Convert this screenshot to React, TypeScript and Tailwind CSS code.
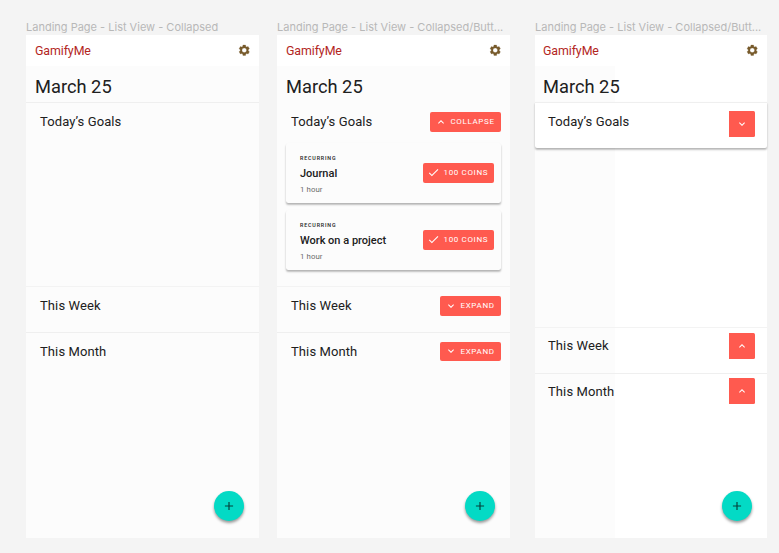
import type { ReactNode } from "react";
import { MdAdd, MdCheck, MdExpandLess, MdExpandMore } from "react-icons/md";

function GearIcon() {
  return (
    <svg viewBox="0 0 24 24" className="size-[12.5px]" fill="#775a2b" stroke="#775a2b" strokeWidth="0.5" fillRule="evenodd">
      <path d="M9.500 2h5l.5 2.800 1.700 1 2.700-1 2.500 4.300-2.200 1.800v2.200l2.200 1.800-2.500 4.300-2.700-1-1.700 1-.5 2.800h-5L9 19.200l-1.700-1-2.700 1-2.500-4.300 2.200-1.800v-2.200L2.100 9.100l2.500-4.300 2.700 1 1.700-1zM12 7.500a4.500 4.500 0 1 0 0 9 4.500 4.500 0 0 0 0-9z" />
    </svg>
  );
}

function Frame({ label, split, children }: { label: string; split?: boolean; children: ReactNode }) {
  return (
    <div className={split ? "w-[232px]" : "w-[233px]"}>
      <div className="h-[15px] whitespace-nowrap font-['Inter'] text-[11px] leading-[15px] text-[#b8b8b8]">{label}</div>
      <div
        className={`relative flex h-[503px] flex-col ${
          split ? "bg-[linear-gradient(90deg,#fcfcfc_80px,#ffffff_80px)]" : "bg-[#fcfcfc]"
        }`}
      >
        <header className={`flex h-[31px] items-center justify-between bg-white pr-[9px] ${split ? "pl-[8px]" : "pl-[9px]"}`}>
          <span className="pt-[1px] text-[12.4px] leading-[30px] tracking-[-0.1px] text-[#b3261e]">GamifyMe</span>
          <GearIcon />
        </header>
        <h1 className={`h-[36px] pt-[4px] text-[18.3px] leading-[34px] ${split ? "pl-[8px]" : "pl-[9px]"}`}>March 25</h1>
        {children}
        <button className="absolute bottom-[17px] right-[15px] flex size-[30px] items-center justify-center rounded-full bg-[#03dac5] shadow-[0_2px_3px_rgba(0,0,0,0.4)]">
          <MdAdd className="size-[14px] text-[#06403b]" />
        </button>
      </div>
    </div>
  );
}

function Section({
  title,
  className,
  titleClass = "pl-[14px] pt-[9px]",
  action,
  children,
}: {
  title: string;
  className: string;
  titleClass?: string;
  action?: ReactNode;
  children?: ReactNode;
}) {
  return (
    <section className={`border-t ${className}`}>
      <div className="flex items-start justify-between">
        <h2 className={`text-[13px] leading-[20px] tracking-[0.1px] ${titleClass}`}>{title}</h2>
        {action}
      </div>
      {children}
    </section>
  );
}

function Chevron({ up }: { up?: boolean }) {
  const Icon = up ? MdExpandLess : MdExpandMore;
  return <Icon className="size-[12px] shrink-0" />;
}

function ToggleButton({ open, className = "mt-[9px]" }: { open?: boolean; className?: string }) {
  return (
    <button
      className={`mr-[9px] flex h-[19.5px] items-center gap-[3.5px] whitespace-nowrap rounded-[2px] bg-[#ff5a4f] pl-[5px] text-[8px] leading-[19px] tracking-[0.65px] text-white ${
        open ? "w-[71px]" : "w-[61px]"
      } ${className}`}
    >
      <Chevron up={open} />
      {open ? "COLLAPSE" : "EXPAND"}
    </button>
  );
}

function SquareButton({ up, className }: { up?: boolean; className: string }) {
  return (
    <button className={`mr-[12px] flex size-[26px] items-center justify-center rounded-r-[1.5px] bg-[#ff5a4f] text-white ${className}`}>
      <Chevron up={up} />
    </button>
  );
}

function GoalCard({ title }: { title: string }) {
  return (
    <div className="flex h-[60px] items-start justify-between rounded-[2.5px] bg-[#fcfcfc] pl-[14px] pr-[7px] shadow-[0_2px_2px_rgba(0,0,0,0.22),0_1px_2px_rgba(0,0,0,0.1)]">
      <div className="pt-[11px]">
        <div className="text-[5.3px] font-medium leading-[9px] tracking-[0.85px]">RECURRING</div>
        <div className="mt-[2px] text-[11px] font-medium leading-[18px]">{title}</div>
        <div className="mt-[2px] text-[7.8px] leading-[10px] tracking-[0.1px] text-[#6c6c6c]">1 hour</div>
      </div>
      <button className="mt-[20px] flex h-[19.5px] w-[71px] items-center whitespace-nowrap rounded-[2px] bg-[#ff5a4f] pl-[4px] text-[8px] leading-[19px] tracking-[0.65px] text-white">
        <MdCheck className="mr-[3.5px] size-[13px] shrink-0" />
        100 COINS
      </button>
    </div>
  );
}

export default function App() {
  return (
    <main className="flex h-[553px] w-[779px] overflow-hidden bg-[#f4f4f4] pl-[26px] pt-[20px] font-['Roboto',sans-serif] text-[#202020]">
      <Frame label="Landing Page - List View - Collapsed">
        <Section title="Today’s Goals" className="h-[184px] border-[#efefef]" />
        <Section title="This Week" className="h-[46px] border-[#f3f3f3]" />
        <Section title="This Month" className="grow border-[#efefef]" />
      </Frame>
      <div className="w-[18px]" />
      <Frame label="Landing Page - List View - Collapsed/Butt...">
        <Section title="Today’s Goals" className="h-[184px] border-transparent" action={<ToggleButton open />}>
          <div className="mt-[11px] flex flex-col gap-[7px] px-[9px]">
            <GoalCard title="Journal" />
            <GoalCard title="Work on a project" />
          </div>
        </Section>
        <Section title="This Week" className="h-[46px] border-[#f3f3f3]" action={<ToggleButton />} />
        <Section title="This Month" className="grow border-[#efefef]" action={<ToggleButton className="mt-[8.5px]" />} />
      </Frame>
      <div className="w-[25px]" />
      <Frame label="Landing Page - List View - Collapsed/Butt..." split>
        <Section
          title="Today’s Goals"
          className="h-[46px] rounded-b-[2px] border-[#efefef] bg-white shadow-[0_2px_2px_rgba(0,0,0,0.22),0_1px_2px_rgba(0,0,0,0.1)]"
          titleClass="pl-[13px] pt-[9px]"
          action={<SquareButton className="mt-[8px]" />}
        />
        <div className="h-[179px]" />
        <Section title="This Week" className="h-[46px] border-[#f3f3f3]" titleClass="pl-[13px] pt-[8px]" action={<SquareButton up className="mt-[5px]" />} />
        <Section title="This Month" className="grow border-[#efefef]" titleClass="pl-[13px] pt-[8px]" action={<SquareButton up className="mt-[4px]" />} />
      </Frame>
    </main>
  );
}
